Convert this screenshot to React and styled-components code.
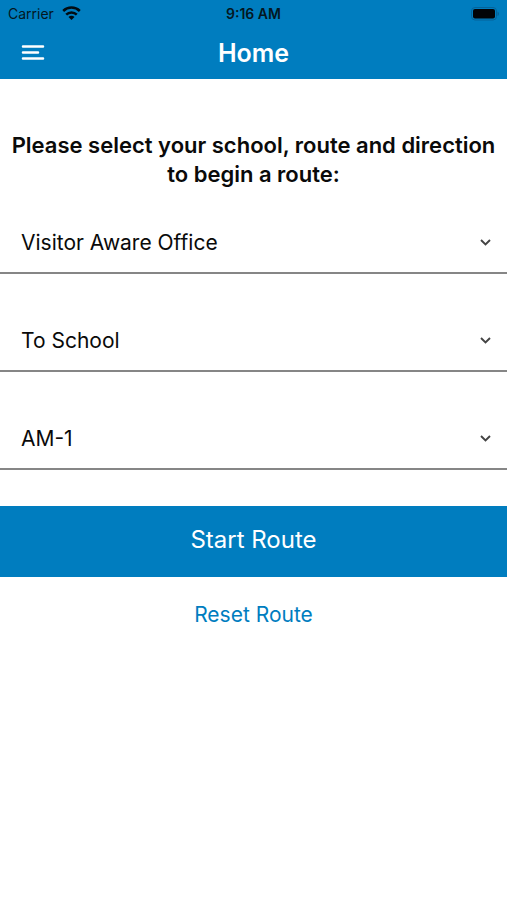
import React, { useState } from 'react';
import styled, { createGlobalStyle } from 'styled-components';

const theme = {
  primary: '#007dbf',
  text: '#0a0a0a',
  line: '#868686',
};

const GlobalStyle = createGlobalStyle`
  * {
    box-sizing: border-box;
  }

  body {
    margin: 0;
    background: white;
    color: ${theme.text};
    font-family: Inter, 'Liberation Sans', sans-serif;
  }

  button,
  select {
    font-family: inherit;
  }
`;

const TopBar = styled.header`
  background: ${theme.primary};
`;

const StatusBar = styled.div`
  display: grid;
  grid-template-columns: 1fr auto 1fr;
  align-items: center;
  height: 27px;
  padding: 0 8px;
  color: #041722;
  font-size: 14px;
`;

const Carrier = styled.span`
  display: flex;
  align-items: center;
  gap: 8px;
`;

const Clock = styled.span`
  font-weight: 600;
`;

const BatteryIcon = styled.svg`
  justify-self: end;
`;

const NavBar = styled.div`
  display: grid;
  grid-template-columns: 1fr auto 1fr;
  align-items: center;
  height: 52px;
  padding: 0 20px;
  color: white;
`;

const MenuButton = styled.button`
  display: flex;
  justify-self: start;
  padding: 0;
  border: 0;
  background: none;
  color: inherit;
`;

const Title = styled.h1`
  margin: 0;
  font-size: 25px;
  font-weight: 600;
`;

const Prompt = styled.h2`
  margin: 0;
  padding: 52px 8px 23px;
  font-size: 22px;
  font-weight: 600;
  line-height: 29px;
  text-align: center;
`;

const Fields = styled.div`
  display: flex;
  flex-direction: column;
  gap: 36px;
`;

const Field = styled.div`
  position: relative;
  border-bottom: 2px solid ${theme.line};
`;

const Select = styled.select`
  display: block;
  width: 100%;
  height: 60px;
  padding: 0 48px 0 21px;
  border: 0;
  background: none;
  color: inherit;
  font-size: 21px;
  appearance: none;
`;

const Chevron = styled.svg`
  position: absolute;
  top: 26px;
  right: 15px;
  pointer-events: none;
`;

const Actions = styled.div`
  display: flex;
  flex-direction: column;
  padding-top: 36px;
`;

const StartButton = styled.button`
  height: 71px;
  padding: 0 16px 4px;
  border: 0;
  background: ${theme.primary};
  color: white;
  font-size: 24px;
`;

const ResetButton = styled.button`
  align-self: center;
  margin-top: 21px;
  padding: 4px 16px;
  border: 0;
  background: none;
  color: ${theme.primary};
  font-size: 21px;
`;

const Picker = ({ label, options }) => {
  const [value, setValue] = useState(options[0]);

  return (
    <Field>
      <Select
        aria-label={label}
        value={value}
        onChange={e => setValue(e.target.value)}
      >
        {options.map(option => (
          <option key={option}>{option}</option>
        ))}
      </Select>
      <Chevron width="13" height="9" viewBox="0 0 13 9" fill="none">
        <path d="M2 2l4.500 4.500L11 2" stroke="#444" strokeWidth="1.900" />
      </Chevron>
    </Field>
  );
};

const App = () => {
  return (
    <>
      <GlobalStyle />
      <TopBar>
        <StatusBar>
          <Carrier>
            Carrier
            <svg width="19" height="16" viewBox="0 0 19 16" fill="none">
              <path
                d="M1.200 5a11.800 11.800 0 0 1 16.600 0M4.200 8.600a7.500 7.500 0 0 1 10.600 0"
                stroke="#020c12"
                strokeWidth="2.500"
              />
              <path d="M9.500 14L6.500 11a4.200 4.200 0 0 1 6 0z" fill="#020c12" />
            </svg>
          </Carrier>
          <Clock>9:16 AM</Clock>
          <BatteryIcon width="29" height="14" viewBox="0 0 29 14" fill="none">
            <rect x="1.500" y=".5" width="25" height="12.500" rx="3.500" stroke="#05639a" />
            <rect x="3" y="2" width="22" height="9.500" rx="2" fill="#020408" />
            <path d="M27.500 4.500c2 .8 2 3.800 0 4.600z" fill="#05639a" />
          </BatteryIcon>
        </StatusBar>
        <NavBar>
          <MenuButton type="button" aria-label="Menu">
            <svg width="25" height="18" viewBox="0 0 25 18" fill="none">
              <path
                d="M3 2.500h20M3 8.500h15M3 14.500h20"
                stroke="currentColor"
                strokeWidth="2.500"
                strokeLinecap="round"
              />
            </svg>
          </MenuButton>
          <Title>Home</Title>
        </NavBar>
      </TopBar>
      <main>
        <Prompt>
          Please select your school, route and direction to begin a route:
        </Prompt>
        <Fields>
          <Picker label="School" options={['Visitor Aware Office']} />
          <Picker label="Direction" options={['To School', 'From School']} />
          <Picker label="Route" options={['AM-1']} />
        </Fields>
        <Actions>
          <StartButton type="button">Start Route</StartButton>
          <ResetButton type="button">Reset Route</ResetButton>
        </Actions>
      </main>
    </>
  );
};

export default App;
